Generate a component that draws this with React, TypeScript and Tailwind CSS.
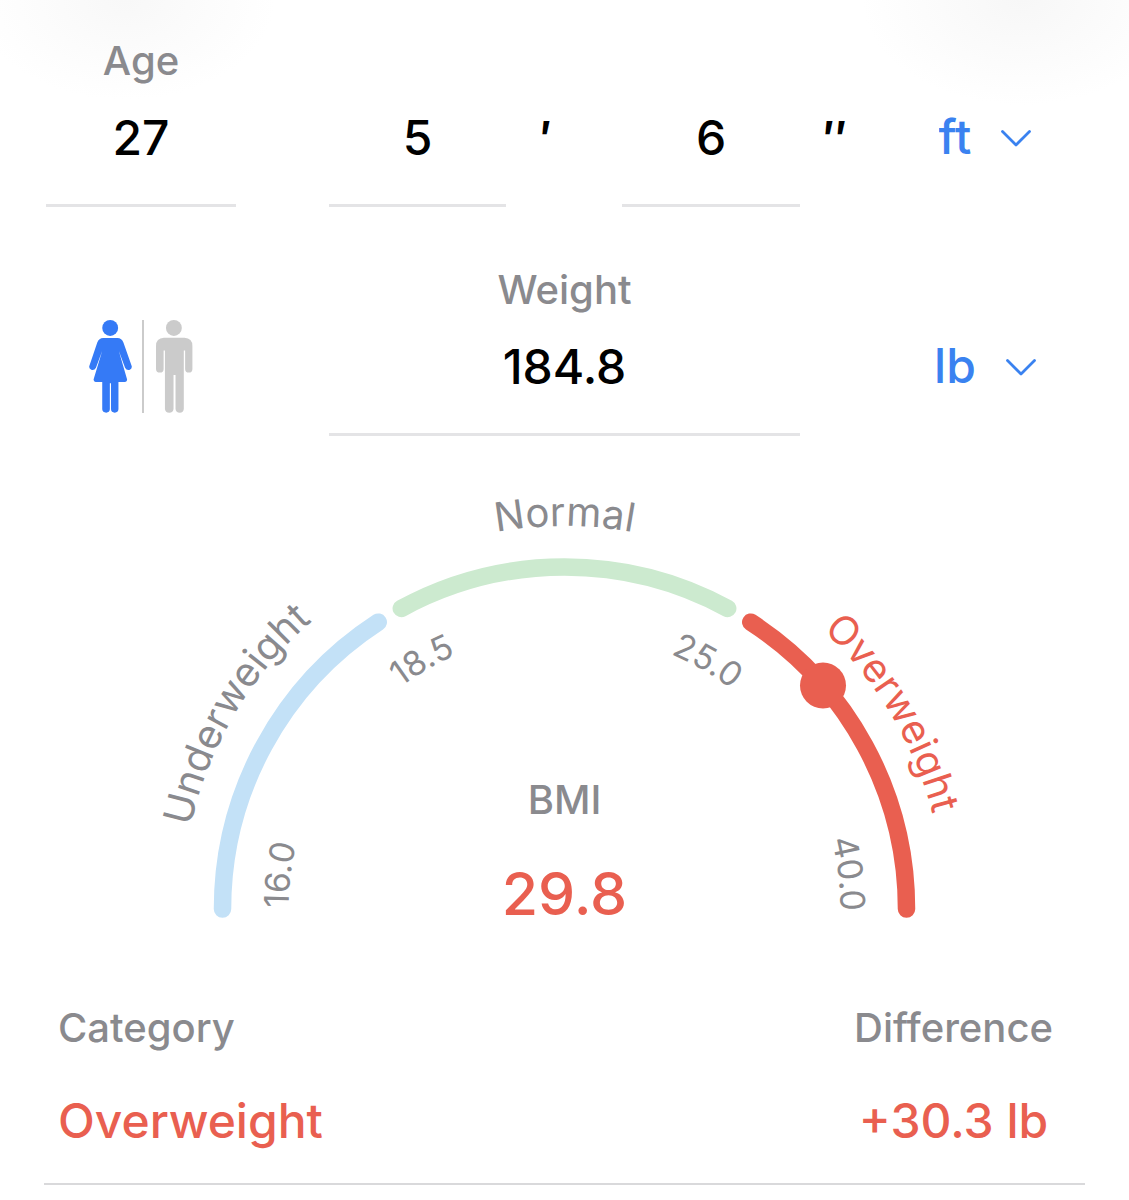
import { useState } from "react";

const CX = 564.5;
const CY = 909;

function point(radius: number, degrees: number) {
  const a = (degrees * Math.PI) / 180;
  return `${(CX - radius * Math.cos(a)).toFixed(2)} ${(CY - radius * Math.sin(a)).toFixed(2)}`;
}

// Clockwise arc; 0 degrees is the left end, 180 the right end.
function arc(radius: number, from: number, to: number) {
  return `M${point(radius, from)} A${radius} ${radius} 0 0 1 ${point(radius, to)}`;
}

type CurvedTextProps = { id: string; radius: number; at: number; className: string; children: string };

function CurvedText({ id, radius, at, className, children }: CurvedTextProps) {
  return (
    <>
      <path id={id} d={arc(radius, at - 40, at + 40)} fill="none" />
      <text textAnchor="middle" className={className}>
        <textPath href={`#${id}`} startOffset="50%">
          {children}
        </textPath>
      </text>
    </>
  );
}

function Gauge() {
  return (
    <svg viewBox="150 480 829 450" className="mx-auto mt-11 block w-full max-w-[829px]" role="img" aria-label="BMI 29.8, overweight">
      <g fill="none" strokeWidth="17.5" strokeLinecap="round">
        <path d={arc(342, 0, 57)} className="stroke-[#c3e1f7]" />
        <path d={arc(342, 61.5, 118.5)} className="stroke-[#cceacf]" />
        <path d={arc(342, 123, 180)} className="stroke-[#e95f50]" />
      </g>
      <circle cx="823" cy="685.5" r="23" className="fill-[#e95f50]" />
      <CurvedText id="arc-under" radius={383} at={30.6} className="fill-[#8a8a8e] text-[40px]">Underweight</CurvedText>
      <CurvedText id="arc-normal" radius={383} at={90} className="fill-[#8a8a8e] text-[40px]">Normal</CurvedText>
      <CurvedText id="arc-over" radius={380} at={149.2} className="fill-[#e95f50] text-[40px]">Overweight</CurvedText>
      <CurvedText id="arc-160" radius={276} at={6.9} className="fill-[#8a8a8e] text-[34px]">16.0</CurvedText>
      <CurvedText id="arc-185" radius={276} at={60.2} className="fill-[#8a8a8e] text-[34px]">18.5</CurvedText>
      <CurvedText id="arc-250" radius={276} at={120} className="fill-[#8a8a8e] text-[34px]">25.0</CurvedText>
      <CurvedText id="arc-400" radius={276} at={172.9} className="fill-[#8a8a8e] text-[34px]">40.0</CurvedText>
      <text x={CX} y="814" textAnchor="middle" className="fill-[#8a8a8e] text-[40px] font-medium">BMI</text>
      <text x={CX} y="915" textAnchor="middle" className="fill-[#e95f50] text-[59px] font-medium">29.8</text>
    </svg>
  );
}

function Field({ id, label, name, value }: { id: string; label?: string; name?: string; value: string }) {
  return (
    <div className="flex flex-col">
      {label && (
        <label htmlFor={id} className="text-center text-[40px] leading-[48px] font-medium text-[#8a8a8e]">
          {label}
        </label>
      )}
      <input
        id={id}
        aria-label={name}
        defaultValue={value}
        inputMode="decimal"
        className="h-[122px] w-full border-b-3 border-[#e4e4e6] bg-transparent pt-[22px] pb-[37px] text-center text-[48px] leading-[60px] font-medium text-black outline-none"
      />
    </div>
  );
}

function Mark({ children }: { children: string }) {
  return <span className="pb-[38px] text-center text-[48px] leading-[60px] font-semibold text-black">{children}</span>;
}

function UnitSelect({ name, options }: { name: string; options: string[] }) {
  return (
    <div className="relative mb-10 justify-self-center text-[#3a82f0]">
      <select
        aria-label={name}
        className="block h-[60px] appearance-none bg-transparent pr-[60px] text-[48px] leading-[60px] font-medium outline-none [field-sizing:content]"
      >
        {options.map((o) => (
          <option key={o}>{o}</option>
        ))}
      </select>
      <svg viewBox="0 0 30 17" className="pointer-events-none absolute top-[23px] right-0 w-[30px]" fill="none" stroke="currentColor" strokeWidth="2.8" strokeLinecap="round" strokeLinejoin="round" aria-hidden="true">
        <path d="M1.5 1.5 15 15 28.5 1.5" />
      </svg>
    </div>
  );
}

function WomanIcon() {
  return (
    <svg viewBox="87 59 130 281" className="h-[93px]" fill="currentColor" aria-hidden="true">
      <circle cx="151" cy="83" r="24" />
      <path d="M130 113H173Q186 113 191 127L216 198Q218 207 209 210Q200 212 196 203L177 152L202 238Q203 246 196 246H176V329Q175 339 165 339Q154 339 153.500 329V250H150V329Q149 339 139 339Q128 339 127 329V246H107Q100 246 101 238L127 152L108 203Q103 212 94 209Q86 206 88 198L112 127Q117 113 130 113Z" />
    </svg>
  );
}

function ManIcon() {
  return (
    <svg viewBox="288 59 111 281" className="h-[93px]" fill="currentColor" aria-hidden="true">
      <circle cx="342" cy="83" r="24" />
      <path d="M312 113H374Q398 114 398 138V207Q398 218 387 218Q376 218 376 207V151H372V328Q371 339 360 339Q348 339 347 328V225H341V328Q340 339 328 339Q316 339 315 328V151H311V207Q311 218 300 218Q288 218 288 207V138Q288 114 312 113Z" />
    </svg>
  );
}

const rowGrid = "grid grid-cols-[190fr_93fr_177fr_116fr_178fr_70fr_230fr] items-end";

export default function App() {
  const [sex, setSex] = useState("female");
  const color = (s: string) => (sex === s ? "text-[#357af6]" : "text-[#cbcbcb]");

  return (
    <main className="min-h-screen bg-white bg-[radial-gradient(ellipse_150px_100px_at_125px_0px,#f8f8f8,transparent),radial-gradient(ellipse_160px_105px_at_calc(100%-107px)_0px,#f7f7f7,transparent)] font-['Inter',sans-serif]">
      <form className="pt-[37px] pr-[29px] pl-[46px]">
        <div className={rowGrid}>
          <Field id="age" label="Age" value="27" />
          <span />
          <Field id="feet" name="Feet" value="5" />
          <div className="flex justify-center pr-9"><Mark>′</Mark></div>
          <Field id="inches" name="Inches" value="6" />
          <div className="flex justify-center"><Mark>″</Mark></div>
          <UnitSelect name="Height unit" options={["ft", "cm"]} />
        </div>
        <div className={`${rowGrid} mt-[59px]`}>
          <div role="radiogroup" aria-label="Sex" className="mb-[23px] flex items-center justify-center">
            <label className={`relative cursor-pointer ${color("female")}`}>
              <input type="radio" name="sex" className="absolute inset-0 appearance-none" aria-label="Female" checked={sex === "female"} onChange={() => setSex("female")} />
              <WomanIcon />
            </label>
            <span className="mr-3 ml-[10px] h-[93px] w-[2px] bg-[#cbcbcb]" />
            <label className={`relative cursor-pointer ${color("male")}`}>
              <input type="radio" name="sex" className="absolute inset-0 appearance-none" aria-label="Male" checked={sex === "male"} onChange={() => setSex("male")} />
              <ManIcon />
            </label>
          </div>
          <div className="col-start-3 col-end-6">
            <Field id="weight" label="Weight" value="184.8" />
          </div>
          <span />
          <UnitSelect name="Weight unit" options={["lb", "kg"]} />
        </div>
      </form>

      <Gauge />

      <dl className="mx-11 mt-[74px] flex justify-between border-b-2 border-[#d9d9db] pr-8 pb-8 pl-[14px] font-medium">
        <div>
          <dt className="text-[40px] leading-[48px] text-[#8a8a8e]">Category</dt>
          <dd className="mt-[39px] text-[48px] leading-[60px] text-[#e95f50]">Overweight</dd>
        </div>
        <div className="text-center">
          <dt className="text-[40px] leading-[48px] text-[#8a8a8e]">Difference</dt>
          <dd className="mt-[39px] text-[48px] leading-[60px] text-[#e95f50]">+30.3 lb</dd>
        </div>
      </dl>
    </main>
  );
}
